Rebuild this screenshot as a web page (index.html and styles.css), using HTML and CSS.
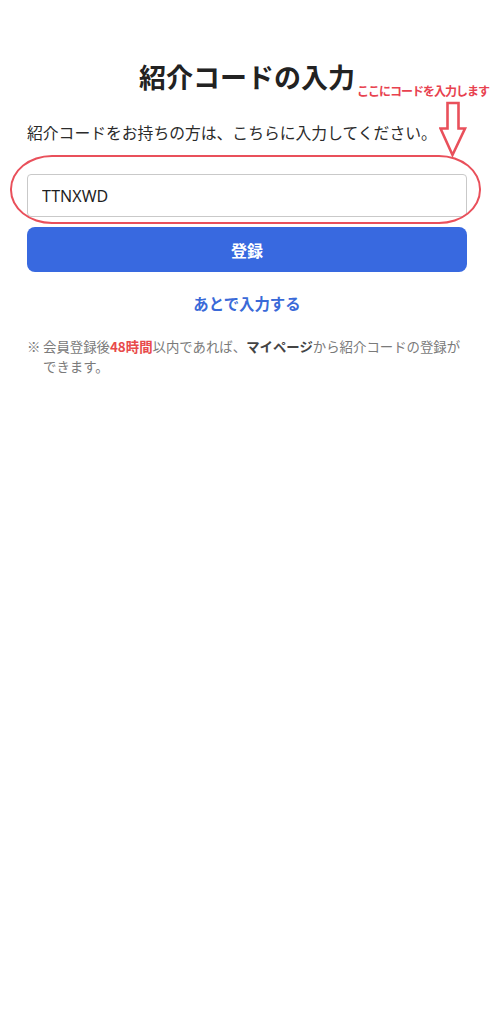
FILE: index.html
```html
<!DOCTYPE html>
<html lang="ja">
<head>
<meta charset="utf-8">
<link rel="stylesheet" href="styles.css">
</head>
<body>
<main class="page">
  <h1 class="title">紹介コードの入力</h1>
  <p class="desc">紹介コードをお持ちの方は、こちらに入力してください。</p>
  <div class="field">
    <input class="code-input" type="text" value="TTNXWD">
  </div>
  <button class="submit">登録</button>
  <a class="later" href="#">あとで入力する</a>
  <div class="note">
    <span class="mark">※</span>
    <p class="note-text"><span>会員登録後</span><span class="hl">48時間</span><span>以内であれば、</span><b class="strong">マイページ</b><span>から紹介コードの登録が</span><span>できます。</span></p>
  </div>

  <span class="anno-text">ここにコードを入力します</span>
  <svg class="anno-arrow" width="34" height="60" viewBox="0 0 34 60">
    <path d="M8.5 2 H19.5 V27.5 H26 L13.5 54 L1.5 27.5 H8.5 Z" fill="none" stroke="#e9505b" stroke-width="2.6" stroke-linejoin="miter"/>
  </svg>
  <div class="anno-ring"></div>
</main>
</body>
</html>
```
FILE: styles.css
```css
* { box-sizing: border-box; }
html, body { margin: 0; padding: 0; background: #fff; }
body {
  font-family: "Noto Sans CJK JP", "Noto Sans", sans-serif;
  color: #222;
}
.page {
  position: relative;
  padding: 59px 27px 0 27px;
  display: flex;
  flex-direction: column;
  min-height: 1024px;
}
.title {
  margin: 0;
  font-size: 27px;
  line-height: 36px;
  font-weight: 700;
  text-align: center;
  color: #222;
}
.desc {
  margin: 26px 0 0 0;
  font-size: 15.8px;
  line-height: 24px;
  color: #2b2b2b;
  white-space: nowrap;
}
.field { margin-top: 29px; }
.code-input {
  display: block;
  width: 100%;
  height: 43px;
  border: 1px solid #c9c9c9;
  border-radius: 4px;
  padding: 0 14px;
  font-family: "Noto Sans", "Noto Sans CJK JP", sans-serif;
  font-size: 16px;
  color: #1f1f1f;
  background: #fff;
  outline: none;
}
.submit {
  margin-top: 10px;
  height: 45px;
  width: 100%;
  border: none;
  border-radius: 8px;
  background: #3869e0;
  color: #fff;
  font-family: "Noto Sans CJK JP", sans-serif;
  font-size: 16px;
  font-weight: 700;
}
.later {
  margin-top: 19px;
  align-self: center;
  font-size: 15.4px;
  line-height: 24px;
  font-weight: 700;
  color: #3a6ad8;
  text-decoration: none;
}
.note {
  margin-top: 21px;
  display: flex;
  font-size: 13.4px;
  line-height: 20px;
  color: #7a7a7a;
}
.mark { flex: 0 0 16px; }
.note-text { margin: 0; flex: 1; }
.hl { color: #e84a4a; font-weight: 700; }
.strong { color: #444; font-weight: 700; }

.anno-text {
  position: absolute;
  left: 357px;
  top: 82px;
  font-size: 12px;
  line-height: 18px;
  font-weight: 700;
  color: #e8424f;
  letter-spacing: -1px;
  white-space: nowrap;
}
.anno-arrow {
  position: absolute;
  left: 439px;
  top: 101px;
}
.anno-ring {
  position: absolute;
  left: 10px;
  top: 155px;
  width: 471px;
  height: 69px;
  border: 2.5px solid #e9505b;
  border-radius: 42px / 34px;
  pointer-events: none;
}
```
